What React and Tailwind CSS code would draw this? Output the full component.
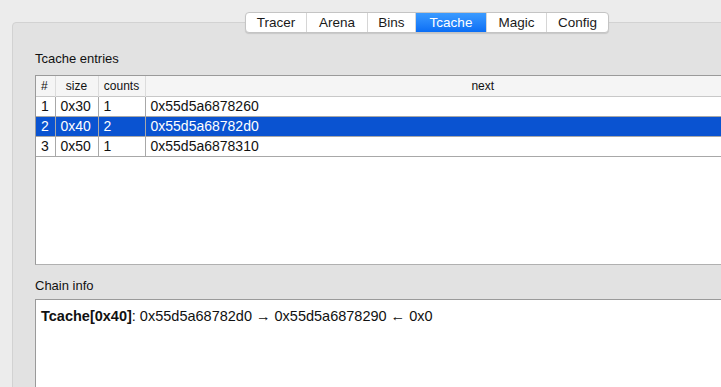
import React from 'react';

const tabs = ['Tracer', 'Arena', 'Bins', 'Tcache', 'Magic', 'Config'];
const tabWidths = ['w-[60px]', 'w-[61px]', 'w-[48px]', 'w-[71px]', 'w-[60px]', 'w-[62px]'];

const rows = [
  { idx: 1, size: '0x30', counts: 1, next: '0x55d5a6878260' },
  { idx: 2, size: '0x40', counts: 2, next: '0x55d5a68782d0', selected: true },
  { idx: 3, size: '0x50', counts: 1, next: '0x55d5a6878310' },
];

const App = () => {
  return (
    <div
      className="w-[721px] h-[387px] overflow-hidden bg-[#ececec] text-[#111]"
      style={{ fontFamily: '"Liberation Sans", Arial, sans-serif' }}
    >
      <div className="flex flex-col w-[830px] ml-[12px] pt-[12px]">
        {/* Tab bar */}
        <div className="relative z-10 flex justify-center -mb-[11px]">
          <div className="flex h-[21px] rounded-[4px] border border-[#c4c4c4] bg-white shadow-[0_1px_1px_rgba(0,0,0,0.12)] overflow-hidden">
            {tabs.map((t, i) => (
              <div
                key={t}
                className={
                  (t === 'Tcache'
                    ? 'bg-gradient-to-b from-[#3b9bff] to-[#0a6ef5] text-white '
                    : 'text-[#1a1a1a] ') +
                  (i > 0 ? 'border-l border-[#d6d6d6] ' : '') +
                  tabWidths[i] +
                  ' flex items-center justify-center text-[13.5px] leading-none'
                }
              >
                {t}
              </div>
            ))}
          </div>
        </div>

        {/* Panel */}
        <div className="h-[370px] rounded-t-[4px] border border-[#d2d2d2] bg-[#e2e2e2] pl-[22px] pr-[21px]">
          <div className="pt-[26px] h-[52px] text-[13px]">Tcache entries</div>

          <div className="h-[190px] bg-white border-l border-t border-[#9a9a9a] border-b border-b-[#b0b0b0]">
            <table className="w-full border-collapse text-[14px] leading-[16px] table-fixed">
              <colgroup>
                <col className="w-[19px]" />
                <col className="w-[43px]" />
                <col className="w-[47px]" />
                <col />
              </colgroup>
              <thead>
                <tr className="h-[20px] bg-[#f5f5f5] text-[12px] border-b border-[#c8c8c8]">
                  <th className="p-0 font-normal text-left pl-[5px]">#</th>
                  <th className="p-0 font-normal border-l border-[#dcdcdc]">size</th>
                  <th className="p-0 font-normal border-l border-[#dcdcdc]">counts</th>
                  <th className="p-0 font-normal border-l border-[#dcdcdc]">next</th>
                </tr>
              </thead>
              <tbody>
                {rows.map((r) => (
                  <tr
                    key={r.idx}
                    className={
                      'h-[20px] border-b border-[#a8a8a8] ' +
                      (r.selected ? 'bg-[#0a53d1] text-white' : '')
                    }
                  >
                    <td className="p-0 pl-[5px]">{r.idx}</td>
                    <td className="p-0 pl-[5px] border-l border-[#a8a8a8]">{r.size}</td>
                    <td className="p-0 pl-[5px] border-l border-[#a8a8a8]">{r.counts}</td>
                    <td className="p-0 pl-[5px] border-l border-[#a8a8a8]">{r.next}</td>
                  </tr>
                ))}
              </tbody>
            </table>
          </div>

          <div className="pt-[11px] h-[34px] text-[13px]">Chain info</div>

          <div className="h-[120px] bg-white border-l border-t border-[#9a9a9a] px-[5px] pt-[6px] text-[14.5px]">
            <span className="font-bold">Tcache[0x40]</span>
            : 0x55d5a68782d0 → 0x55d5a6878290 ← 0x0
          </div>
        </div>
      </div>
    </div>
  );
};

export default App;
